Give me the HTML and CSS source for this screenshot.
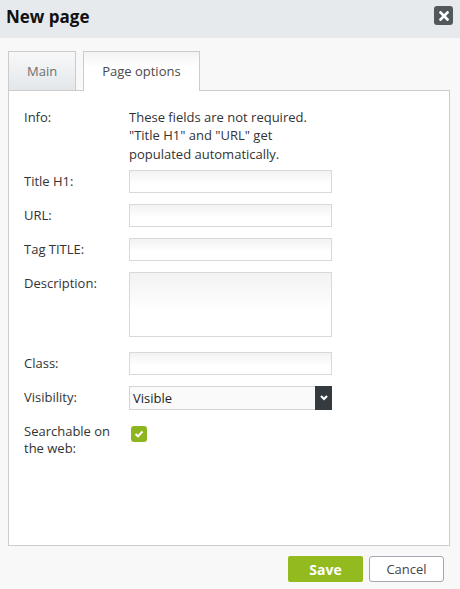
FILE: index.html
```html
<!DOCTYPE html>
<html lang="en">

<head>
    <meta charset="UTF-8">
    <meta name="viewport" content="width=device-width, initial-scale=1.0">
    <title>New page</title>
    <link rel="stylesheet" href="styles.css">
</head>

<body>
    <div class="dialog">
        <header class="dialog-head">
            <h1>New page</h1>
            <button class="close" title="Close">
                <svg width="10" height="10" viewBox="0 0 10 10">
                    <path d="M1.5 1.5 L8.5 8.5 M8.5 1.5 L1.5 8.5" stroke="#fff" stroke-width="2.6" stroke-linecap="square" />
                </svg>
            </button>
        </header>

        <div class="dialog-body">
            <div class="tabs">
                <div class="tab">Main</div>
                <div class="tab active">Page options</div>
            </div>

            <div class="panel">
                <div class="form">
                    <div class="label label-info">Info:</div>
                    <div class="info">These fields are not required.<br>"Title H1" and "URL" get<br>populated automatically.</div>

                    <div class="label">Title H1:</div>
                    <input type="text" class="field">

                    <div class="label">URL:</div>
                    <input type="text" class="field">

                    <div class="label">Tag TITLE:</div>
                    <input type="text" class="field">

                    <div class="label">Description:</div>
                    <textarea class="field area"></textarea>

                    <div class="label">Class:</div>
                    <input type="text" class="field">

                    <div class="label">Visibility:</div>
                    <div class="select">
                        <span>Visible</span>
                        <span class="select-arrow">
                            <svg width="8" height="6" viewBox="0 0 8 6">
                                <path d="M1 1 L4 4 L7 1" stroke="#fff" stroke-width="2.2" fill="none" />
                            </svg>
                        </span>
                    </div>

                    <div class="label label-multi">Searchable on<br>the web:</div>
                    <div class="check">
                        <svg width="10" height="8" viewBox="0 0 10 8">
                            <path d="M1.5 4 L4 6.3 L8.5 1.5" stroke="#fff" stroke-width="2" fill="none" />
                        </svg>
                    </div>
                </div>
            </div>
        </div>

        <footer class="dialog-foot">
            <button class="btn save">Save</button>
            <button class="btn cancel">Cancel</button>
        </footer>
    </div>
</body>

</html>
```

FILE: styles.css
```css
* {
    box-sizing: border-box;
}

body {
    margin: 0;
    font-family: 'Open Sans', 'Noto Sans', sans-serif;
    font-size: 13px;
    color: #333;
    background-color: #f8f8f8;
}

.dialog {
    width: 460px;
    height: 589px;
}

/* header */
.dialog-head {
    height: 38px;
    background-color: #e7eaed;
    display: flex;
    justify-content: space-between;
    align-items: flex-start;
    padding: 5px 7px 0 6px;
}

.dialog-head h1 {
    margin: 0;
    font-size: 17px;
    line-height: 24px;
    font-weight: 700;
    color: #111;
}

.close {
    width: 19px;
    height: 19px;
    margin-top: 1px;
    padding: 0;
    border: none;
    border-radius: 3px;
    background-color: #53585c;
    display: flex;
    align-items: center;
    justify-content: center;
    cursor: pointer;
}

/* tabs */
.dialog-body {
    padding: 13px 10px 0 8px;
}

.tabs {
    display: flex;
    gap: 7px;
    position: relative;
    z-index: 1;
}

.tab {
    height: 39px;
    padding: 0 18px;
    line-height: 39px;
    border: 1px solid #ccc;
    border-bottom: none;
    background: linear-gradient(#f7f8f9, #e4e7ea);
    color: #6f6f6f;
}

.tab.active {
    height: 40px;
    margin-bottom: -1px;
    background: linear-gradient(#f3f3f3, #fff 40%);
    color: #4a4a4a;
}

.panel {
    height: 456px;
    background-color: #fff;
    border: 1px solid #ccc;
    padding: 17px 15px;
}

/* form */
.form {
    display: grid;
    grid-template-columns: 105px 203px;
    row-gap: 11px;
    align-items: start;
}

.label {
    line-height: 23px;
}

.label-info {
    line-height: 18px;
}

.label-multi {
    line-height: 17.5px;
    padding-top: 2px;
}

.info {
    line-height: 18.3px;
    margin-bottom: -4px;
}

.field {
    display: block;
    width: 203px;
    height: 23px;
    border: 1px solid #d9d9d9;
    background: linear-gradient(#f2f2f2, #fff 60%);
    font-family: inherit;
    font-size: 13px;
    margin: 0;
}

.area {
    height: 65px;
    resize: none;
    margin-bottom: 4px;
}

.select {
    display: flex;
    justify-content: space-between;
    height: 24px;
    border: 1px solid #d4d4d4;
    border-right: none;
    background-color: #fafafa;
    font-size: 13px;
    color: #222;
}

.select span:first-child {
    line-height: 22px;
    padding-left: 3px;
}

.select-arrow {
    width: 17px;
    margin-top: -1px;
    margin-bottom: -1px;
    background-color: #353a3f;
    display: flex;
    align-items: center;
    justify-content: center;
}

.check {
    width: 16px;
    height: 16px;
    margin: 5px 0 0 2px;
    border-radius: 3px;
    background-color: #8db51f;
    display: flex;
    align-items: center;
    justify-content: center;
}

/* footer */
.dialog-foot {
    display: flex;
    justify-content: flex-end;
    gap: 6px;
    padding: 10px 16px 0 0;
}

.btn {
    height: 26px;
    width: 75px;
    font-family: inherit;
    cursor: pointer;
    border-radius: 2px;
}

.save {
    border: none;
    background-color: #93ba1f;
    color: #fff;
    font-size: 14px;
    font-weight: 700;
}

.cancel {
    border: 1px solid #a3a9b0;
    background-color: #fff;
    color: #444;
    font-size: 13px;
    border-radius: 3px;
}
```
